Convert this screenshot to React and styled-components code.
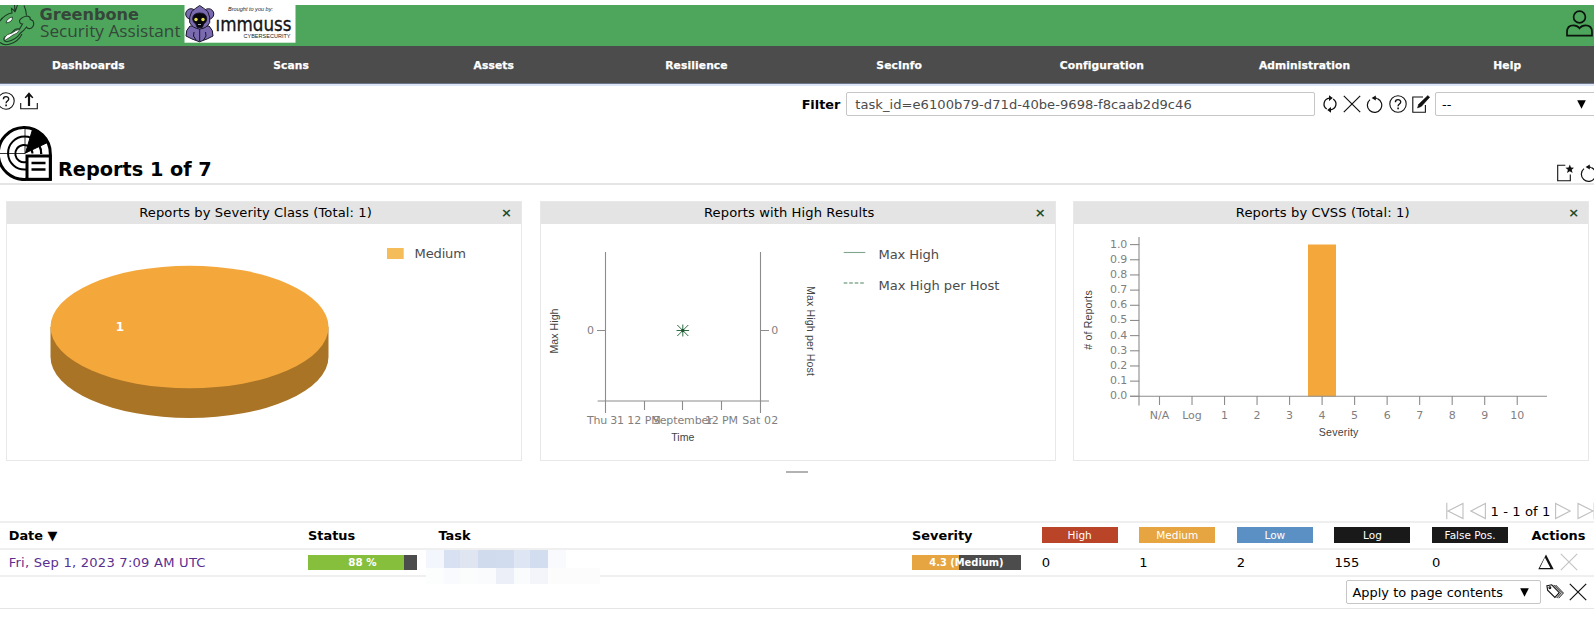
import React from 'react';
import styled, { createGlobalStyle } from 'styled-components';

const GlobalStyle = createGlobalStyle`
  * { box-sizing: border-box; }
  body {
    margin: 0;
    background: #fff;
    color: #000;
    font-family: Verdana, "DejaVu Sans", sans-serif;
    font-size: 13.1px;
    overflow: hidden;
  }
  svg { display: block; }
`;

const Page = styled.div`
  width: 1594px;
  height: 618px;
  padding-top: 5px;
  display: flex;
  flex-direction: column;
  overflow: hidden;
`;

/* ---------- header ---------- */

const Header = styled.header`
  height: 41px;
  flex: none;
  background: #4da65c;
  display: flex;
  justify-content: space-between;
`;

const UserButton = styled.div`
  padding: 5px 1px 0 0;
`;

const NavBar = styled.nav`
  height: 40px;
  flex: none;
  background: #4c4c4c;
  border-bottom: 2px solid #dde6f7;
  display: flex;
  overflow: hidden;
`;

const NavItems = styled.div`
  display: flex;
  flex: none;
  width: 1621.6px;
  margin-left: -13px;
  padding-top: 2px;
  border-bottom: 1px solid #6d7688;
`;

const NavItem = styled.div`
  flex: 1;
  display: flex;
  align-items: center;
  justify-content: center;
  color: #fff;
  font-weight: bold;
  font-size: 10.7px;
  letter-spacing: 0.12px;
  -webkit-text-stroke: 0.25px #fff;
`;

/* ---------- toolbar ---------- */

const Toolbar = styled.div`
  height: 38px;
  flex: none;
  display: flex;
  justify-content: space-between;
  padding-top: 6px;
`;

const ToolIcons = styled.div`
  display: flex;
  gap: 5px;
  margin-left: -3px;
`;

const FilterBar = styled.div`
  display: flex;
  align-items: center;
  height: 24px;
`;

const FilterLabel = styled.span`
  font-weight: bold;
  font-size: 12.8px;
  margin-right: 6px;
`;

const FilterInput = styled.div`
  width: 469px;
  height: 24px;
  border: 1px solid #c6c6c6;
  border-radius: 2px;
  padding-left: 8px;
  line-height: 23px;
  color: #4c4c4c;
  font-size: 13.1px;
  letter-spacing: 0.03px;
`;

const FilterIcons = styled.div`
  display: flex;
  gap: 4.7px;
  margin: 0 5.5px 0 5.5px;
`;

const Select = styled.div`
  width: ${p => p.$width}px;
  height: 24px;
  flex: none;
  border: 1px solid #c6c6c6;
  border-radius: 2px;
  padding: 0 ${p => p.$arrowGap}px 0 6px;
  display: flex;
  align-items: center;
  justify-content: space-between;
  font-size: 12.95px;
  margin-right: ${p => p.$mr || 0}px;
`;

/* ---------- section title ---------- */

const SectionHeader = styled.div`
  height: 61px;
  flex: none;
  border-bottom: 2px solid #e5e5e5;
  display: flex;
  align-items: flex-end;
  justify-content: space-between;
`;

const SectionTitle = styled.div`
  display: flex;
  align-items: flex-end;
  gap: 6px;
  padding-bottom: 2px;
`;

const Title = styled.h2`
  margin: 0;
  font-size: 19.3px;
  line-height: 22px;
`;

const SectionIcons = styled.div`
  display: flex;
  gap: 6px;
  padding-bottom: 1px;
  margin-right: -4px;
`;

/* ---------- dashboard ---------- */

const Dashboard = styled.div`
  flex: none;
  display: grid;
  grid-template-columns: repeat(3, 516px);
  column-gap: 17.6px;
  padding: 16px 0 0 6px;
`;

const Card = styled.section`
  height: 260px;
  border: 1px solid #e8e8e8;
`;

const CardHeader = styled.div`
  height: 22px;
  background: #e4e4e4;
  display: flex;
  align-items: center;
  padding: 0 9px 1px 0;
`;

const CardTitle = styled.div`
  flex: 1;
  text-align: center;
  padding-left: 3px;
  letter-spacing: 0.1px;
`;

const CardClose = styled.span`
  color: #1d4d2b;
  font-weight: bold;
  font-size: 13px;
  line-height: 20px;
`;

const ChartText = styled.text`
  font-family: ${p => (p.$sans ? '"Liberation Sans", Arial, sans-serif' : 'Verdana, "DejaVu Sans", sans-serif')};
  font-size: ${p => p.$size || 11}px;
  font-weight: ${p => (p.$bold ? 'bold' : 'normal')};
  font-style: ${p => (p.$italic ? 'italic' : 'normal')};
  fill: ${p => p.$color || '#7f7f7f'};
`;

const BrandText = styled(ChartText)`
  font-family: "Open Sans", "Noto Sans", sans-serif;
`;

const Axis = styled.path`
  fill: none;
  stroke: #8c8c8c;
  stroke-width: 1.1;
`;

const ResizeRow = styled.div`
  height: 40px;
  flex: none;
  display: flex;
  justify-content: center;
  padding-top: 10px;
`;

const ResizeHandle = styled.div`
  width: 22px;
  height: 2px;
  background: #b2b2b2;
`;

/* ---------- table ---------- */

const Pagination = styled.div`
  height: 20px;
  flex: none;
  display: flex;
  align-items: center;
  justify-content: flex-end;
  margin-right: -1px;
`;

const PageIcons = styled.div`
  display: flex;
  gap: 6px;
`;

const PageText = styled.span`
  margin: 0 4.5px;
  letter-spacing: 0.1px;
`;

const Row = styled.div`
  display: grid;
  grid-template-columns: 299.3px 130.5px 473.5px 129.7px repeat(4, 97.6px) 99.5px 1fr;
  grid-template-rows: 100%;
  align-items: center;
  height: ${p => p.$height}px;
  flex: none;
  border-top: 2px solid #efefef;
  padding-left: 8.7px;
`;

const HeadCell = styled.div`
  font-weight: bold;
  font-size: 12.9px;
`;

const SeverityChip = styled.div`
  width: 76px;
  height: 16px;
  background: ${p => p.$color};
  color: #fff;
  font-size: 10.5px;
  line-height: 16px;
  text-align: center;
`;

const DateLink = styled.a`
  color: #5a2f91;
  letter-spacing: 0.22px;
`;

const Bar = styled.div`
  width: ${p => p.$width}px;
  height: 14.5px;
  background: linear-gradient(to right, ${p => p.$color} ${p => p.$value}%, #4c4c4c ${p => p.$value}%);
  color: #fff;
  font-weight: bold;
  font-size: ${p => p.$size}px;
  line-height: 15.5px;
  text-align: center;
`;

const Redacted = styled.div`
  display: grid;
  grid-template-columns: 18px 16px 18px 18px 18px 16px 18px 18px 34px;
  grid-template-rows: 18px 16px;
  margin: 0 0 0 -12.5px;
  align-self: start;
  position: relative;
  z-index: 1;
`;

const Pixel = styled.i`
  background: ${p => p.$color};
`;

const RowActions = styled.div`
  display: flex;
  align-items: center;
  gap: 6px;
  padding-left: 6px;
`;

const Footer = styled.div`
  height: 34px;
  flex: none;
  border-top: 2px solid #efefef;
  border-bottom: 1px solid #e5e5e5;
  display: flex;
  align-items: center;
  justify-content: flex-end;
  gap: 5px;
  padding: 0 7.5px 1px 0;
`;

/* ---------- icons ---------- */

const Icon = ({ w = 18, h = 18, vb = '0 0 18 18', children }) => (
  <svg width={w} height={h} viewBox={vb} fill="none" stroke="#111" strokeWidth="1.1">
    {children}
  </svg>
);

const HelpIcon = () => (
  <Icon>
    <circle cx="9" cy="9" r="8.2" />
    <path d="M6.4 7.2C6.4 3.8 11.7 3.9 11.7 7c0 2-2.6 2-2.6 4.2" strokeWidth="1.4" />
    <path d="M9.1 12.6v1.6" strokeWidth="1.6" />
  </Icon>
);

const ExportIcon = () => (
  <Icon>
    <path d="M.7 11v5.8h16.6V11" />
    <path d="M9 14V3" strokeWidth="2.2" />
    <path d="M9 .3l4.4 5.2-1 .7L9 3.6 5.6 6.2l-1-.7z" fill="#111" stroke="none" />
  </Icon>
);

const RefreshIcon = () => (
  <Icon>
    <path d="M5.8 14C1.4 11 2.2 4 8.600 3.100M12.200 4C16.600 7 15.800 14 9.400 14.900" strokeWidth="1.3" />
    <path d="M8 .3v5.600l3.800-2.800zM10 17.700v-5.600l-3.800 2.800z" fill="#111" stroke="none" />
  </Icon>
);

const CrossIcon = ({ color = '#111' }) => (
  <Icon>
    <path d="M.8.8l16.400 16.400M17.200.8L.8 17.200" stroke={color} strokeWidth="1.2" />
  </Icon>
);

const ResetIcon = () => (
  <Icon>
    <path d="M4 4.600A7.200 7.200 0 1 0 11.500 3.600" strokeWidth="1.2" />
    <path d="M5.600 3L9.800 .4v5.200zM9 2.200q2 0 3 1.600l-3 .2z" fill="#111" stroke="none" />
  </Icon>
);

const EditIcon = () => (
  <Icon>
    <path d="M11 2H.8v15.200h12.600V10" />
    <path d="M15.800.6l1.900 1.600L9.300 11.400 5.500 13l1.200-3.800z" fill="#111" stroke="#111" strokeWidth=".5" />
  </Icon>
);

const NewIcon = () => (
  <Icon>
    <path d="M9.300 1.300H1.700v15.500h12.600V10.500" />
    <path d="M13.800.4l1.200 3.100 3.200.2-2.500 2.100.9 3.200-2.800-1.800L11 9l.9-3.200-2.500-2.100 3.200-.2z" fill="#111" stroke="none" />
  </Icon>
);

const DeltaIcon = () => (
  <Icon w={16} h={16} vb="0 0 16 16">
    <path d="M8 .6L15.700 15.200H.3zM6.900 3.600L1.900 13.900h10.500z" fill="#111" fillRule="evenodd" stroke="none" />
  </Icon>
);

const TagsIcon = () => (
  <Icon>
    <path d="M.9 2.700l4.800-.9 7.600 7.900-4.400 4.700L1.600 7.200z" />
    <circle cx="3.900" cy="4.700" r=".9" />
    <path d="M7.600 1.900l7.800 7.900-4.700 5.200M9.600 2l7.800 8-4.800 5.200" strokeWidth="1" />
  </Icon>
);

const ArrowDown = () => (
  <svg width="9" height="9" viewBox="0 0 9 9">
    <path d="M.2.2h8.600L4.500 8.800z" fill="#000" />
  </svg>
);

const PageArrow = ({ flip, bar, w }) => (
  <svg width={w} height="18" viewBox={`0 0 ${w} 18`} fill="none" stroke="#bfbfbf" strokeWidth="1.1">
    <g transform={flip ? `translate(${w} 0) scale(-1 1)` : undefined}>
      <path d={bar ? 'M2 9L17 1.500v15zM.8.800v16.400' : 'M.9 9L15.400 1.500v15z'} />
    </g>
  </svg>
);

const ReportIcon = () => (
  <svg width="52" height="55" viewBox="0 0 52 55" fill="none" stroke="#000">
    <path d="M26 53.500A26 26 0 1 1 50.300 27.500V53.300H25" strokeWidth="3" />
    <path d="M26 43.500a16.500 16.500 0 1 1 15-15.500M26 36a8.600 8.600 0 1 1 6.500-8.500" strokeWidth="2" />
    <path d="M0 27.500h25M25 2v26" strokeWidth=".8" />
    <path d="M25.500 27L32.500 3.500Q42 6.500 47.500 16.500z" fill="#000" />
    <path d="M39 19.500q2.500 3.500 2.500 8.500" strokeWidth="1.8" />
    <rect x="27" y="30" width="23.300" height="23.300" fill="#fff" strokeWidth="3" />
    <path d="M31.500 37h14M31.500 43.500h14" strokeWidth="2.6" />
  </svg>
);

const UserIcon = () => (
  <svg width="27" height="27" viewBox="0 0 27 27" fill="none" stroke="#0b130c" strokeWidth="1.7">
    <circle cx="13.500" cy="7" r="5.900" />
    <path d="M1 25.700V22c0-4.500 2.500-6.600 6.500-6.600 3 0 4.500 1 6 2.900 1.500-1.900 3-2.900 6-2.900 4 0 6.500 2.100 6.500 6.600v3.700z" />
  </svg>
);

const Brand = () => (
  <svg width="300" height="41" viewBox="0 5 300 41">
    {/* dragon head */}
    <g fill="none" stroke="#1e3a25" strokeWidth="1.1">
      <path d="M0 21Q5 14 12 13L11.500 8.500q2 1 3.500 3.500L14.500 5M15 12L17.500 5M24 5.500q2 4 2.500 10M2 18q-1 2-2 3" />
      <path d="M27 16q-5.500 1-7.500 4.500 0 3.500 3 3.500l-3 5q-4-1-7 3T4.500 37q-2 4 2.500 4.700Q16 40 20.500 33q3-2 6-6 1.500 2.500 5 1 3.500-3 1.500-7l-3-2q1-2-3-3z" />
      <path d="M0 42.500q4 3.500 10 1.500 8-2 12-10" />
    </g>
    <path d="M6 23q1-5 6.500-6 .5 5-6.500 6zM5 37q2-3 7-4 4-3 8-4-2 5-7 6-4 3-7.500 5-2 0-.5-3z" fill="#fff" stroke="#1e3a25" strokeWidth=".8" />
    <ChartText x="39.500" y="20.400" $size={16.5} $bold $color="#36463a" textLength="99.500" lengthAdjust="spacingAndGlyphs">Greenbone</ChartText>
    <BrandText x="40" y="37.300" $size={16} $color="#36463a" textLength="140.500" lengthAdjust="spacingAndGlyphs">Security Assistant</BrandText>
    {/* sponsor badge */}
    <rect x="184.500" y="5" width="111" height="37.700" fill="#fff" />
    <g stroke="#191528" strokeWidth="1">
      <circle cx="191" cy="14" r="5.300" fill="#7a6bb0" />
      <circle cx="208.500" cy="14" r="5.300" fill="#7a6bb0" />
      <path d="M190 26q-4.500 4-4 10 5 3 13.500 5.800Q208 39 213 36q.5-6-4-10z" fill="#7a6bb0" />
      <path d="M199.700 5.500q4 2.500 8 6 3 6 2 11-3 6-10 6.500-7-.5-10-6.500-1-5 2-11 4-3.500 8-6z" fill="#7a6bb0" />
      <path d="M199.700 29v12.500M194 32q-2 4 2 8M205.500 32q2 4-2 8" fill="none" />
      <path d="M192.700 19q0-6 7-6t7 6q0 3-3 5l-1.500 3.500h-5l-1.500-3.500q-3-2-3-5z" fill="#08080c" />
    </g>
    <circle cx="196" cy="19.500" r="1.700" fill="#e3e04a" />
    <circle cx="203" cy="19.500" r="1.700" fill="#e3e04a" />
    <path d="M198 24.500h3" stroke="#aaa" strokeWidth="1" />
    <ChartText x="228" y="11.300" $size={5.5} $italic $sans $color="#222" textLength="45" lengthAdjust="spacingAndGlyphs">Brought to you by:</ChartText>
    <ChartText x="215.500" y="31" $size={18.8} $color="#151515" stroke="#151515" strokeWidth=".35" textLength="76" lengthAdjust="spacingAndGlyphs">ımmɑuss</ChartText>
    <ChartText x="243.500" y="38.300" $size={5.5} $sans $color="#222" textLength="47" lengthAdjust="spacingAndGlyphs">CYBERSECURITY</ChartText>
  </svg>
);

/* ---------- charts (drawn in page units, offset by the card body) ---------- */

const PieChart = () => (
  <svg width="514" height="236" viewBox="7 224 514 236">
    <path d="M50.500 327v29.700a139 61.300 0 0 0 278 0V327z" fill="#a97426" />
    <ellipse cx="189.500" cy="327" rx="139" ry="61.300" fill="#f4a83c" />
    <ChartText x="120" y="330.800" $size={12} $bold $color="#fff" textAnchor="middle">1</ChartText>
    <rect x="387" y="248" width="16.700" height="11" fill="#f5bd5a" />
    <ChartText x="414.500" y="258" $size={13.1} $color="#4c4c4c" textLength="51.500">Medium</ChartText>
  </svg>
);

const TIME_TICKS = [
  { x: 605.4, label: 'Thu 31', w: 37 },
  { x: 644, label: '12 PM', w: 33.5 },
  { x: 682.8, label: 'September', w: 60 },
  { x: 721.5, label: '12 PM', w: 33 },
  { x: 760.2, label: 'Sat 02', w: 36 },
];

const HighResultsChart = () => (
  <svg width="514" height="236" viewBox="541 224 514 236">
    <Axis d="M605.500 252v161M760.500 252v161M597.600 401H769M597 330.500h8.500M760.500 330.500h8.500M644.500 401v9M682.500 401v9M721.500 401v9" />
    <ChartText x="594" y="333.700" textAnchor="end">0</ChartText>
    <ChartText x="771.200" y="333.700">0</ChartText>
    {TIME_TICKS.map(t => (
      <ChartText key={t.x} x={t.x} y="423.500" textAnchor="middle" textLength={t.w}>{t.label}</ChartText>
    ))}
    <ChartText x="682.800" y="440.600" $sans $size={10.6} $color="#444" textAnchor="middle">Time</ChartText>
    <ChartText transform="translate(558 331) rotate(-90)" $sans $size={10.6} $color="#444" textAnchor="middle" textLength="45">Max High</ChartText>
    <ChartText transform="translate(807 331) rotate(90)" $sans $size={10.6} $color="#444" textAnchor="middle" textLength="90">Max High per Host</ChartText>
    <path d="M677.300 325l11 11M688.300 325l-11 11M682.800 324.500v12M676.500 330.500h12.600" stroke="#2e6b40" strokeWidth="1" />
    <circle cx="682.800" cy="330.500" r="1.700" fill="#1d5230" />
    <path d="M843.700 252.500H865.300" stroke="#7fa68d" strokeWidth="1.1" />
    <path d="M843.700 283H864" stroke="#4a8260" strokeWidth="1.1" strokeDasharray="3.600 1.900" />
    <ChartText x="878.500" y="259" $size={13.1} $color="#4c4c4c" textLength="60.500">Max High</ChartText>
    <ChartText x="878.500" y="289.500" $size={13.1} $color="#4c4c4c" textLength="121">Max High per Host</ChartText>
  </svg>
);

const CVSS_LABELS = ['N/A', 'Log', '1', '2', '3', '4', '5', '6', '7', '8', '9', '10'];

const CvssChart = () => (
  <svg width="514" height="236" viewBox="1074 224 514 236">
    <rect x="1308" y="244.500" width="28" height="152" fill="#f4a83c" />
    <Axis d="M1139 237v168.500M1130 396.300H1547" />
    {Array.from({ length: 11 }, (_, i) => (
      <g key={i}>
        <Axis d={`M1130 ${396.3 - i * 15.17}h9.300`} />
        <ChartText x="1127.300" y={399.2 - i * 15.17} textAnchor="end" textLength="17.200">{(i / 10).toFixed(1)}</ChartText>
      </g>
    ))}
    {CVSS_LABELS.map((label, i) => (
      <g key={label}>
        <Axis d={`M${1159.5 + i * 32.52} 396v9`} />
        <ChartText x={1159.5 + i * 32.52} y="419" textAnchor="middle">{label}</ChartText>
      </g>
    ))}
    <ChartText x="1338.600" y="435.600" $sans $size={10.6} $color="#444" textAnchor="middle" textLength="39.500">Severity</ChartText>
    <ChartText transform="translate(1091.500 320) rotate(-90)" $sans $size={10.6} $color="#444" textAnchor="middle" textLength="59.500">{'# of Reports'}</ChartText>
  </svg>
);

const MENU = ['Dashboards', 'Scans', 'Assets', 'Resilience', 'SecInfo', 'Configuration', 'Administration', 'Help'];

const CARDS = [
  { title: 'Reports by Severity Class (Total: 1)', Chart: PieChart },
  { title: 'Reports with High Results', Chart: HighResultsChart },
  { title: 'Reports by CVSS (Total: 1)', Chart: CvssChart },
];

const CHIPS = [
  { label: 'High', color: '#b94427' },
  { label: 'Medium', color: '#e6a540' },
  { label: 'Low', color: '#5b90c4' },
  { label: 'Log', color: '#191919' },
  { label: 'False Pos.', color: '#191919' },
];

const PIXELS = [
  '#f3f6fc', '#d8e1f2', '#dfe6f2', '#d0dbed', '#d2dcef', '#dfe6f3', '#d3ddf0', '#f8fafd', '#ffffff',
  '#fcfdfd', '#f9fafd', '#fbfdfc', '#fafbfc', '#eceff8', '#fafbfd', '#f4f5fa', '#fcfcfc', '#fcfcfc',
];

export default function App() {
  return (
    <>
      <GlobalStyle />
      <Page>
        <Header>
          <Brand />
          <UserButton><UserIcon /></UserButton>
        </Header>
        <NavBar>
          <NavItems>
            {MENU.map(m => <NavItem key={m}>{m}</NavItem>)}
          </NavItems>
        </NavBar>

        <Toolbar>
          <ToolIcons>
            <HelpIcon />
            <ExportIcon />
          </ToolIcons>
          <FilterBar>
            <FilterLabel>Filter</FilterLabel>
            <FilterInput>task_id=e6100b79-d71d-40be-9698-f8caab2d9c46</FilterInput>
            <FilterIcons>
              <RefreshIcon />
              <CrossIcon />
              <ResetIcon />
              <HelpIcon />
              <EditIcon />
            </FilterIcons>
            <Select $width={164} $arrowGap={12} $mr={-5}>
              <span>--</span>
              <ArrowDown />
            </Select>
          </FilterBar>
        </Toolbar>

        <SectionHeader>
          <SectionTitle>
            <ReportIcon />
            <Title>Reports 1 of 7</Title>
          </SectionTitle>
          <SectionIcons>
            <NewIcon />
            <ResetIcon />
          </SectionIcons>
        </SectionHeader>

        <Dashboard>
          {CARDS.map(({ title, Chart }) => (
            <Card key={title}>
              <CardHeader>
                <CardTitle>{title}</CardTitle>
                <CardClose>×</CardClose>
              </CardHeader>
              <Chart />
            </Card>
          ))}
        </Dashboard>
        <ResizeRow><ResizeHandle /></ResizeRow>

        <Pagination>
          <PageIcons>
            <PageArrow bar w={18} />
            <PageArrow w={16} />
          </PageIcons>
          <PageText>1 - 1 of 1</PageText>
          <PageIcons>
            <PageArrow flip w={16} />
            <PageArrow flip bar w={18} />
          </PageIcons>
        </Pagination>

        <Row $height={26.5}>
          <HeadCell>Date ▼</HeadCell>
          <HeadCell>Status</HeadCell>
          <HeadCell>Task</HeadCell>
          <HeadCell>Severity</HeadCell>
          {CHIPS.map(c => <SeverityChip key={c.label} $color={c.color}>{c.label}</SeverityChip>)}
          <HeadCell>Actions</HeadCell>
        </Row>
        <Row $height={27.5}>
          <DateLink>Fri, Sep 1, 2023 7:09 AM UTC</DateLink>
          <Bar $width={109} $value={88} $color="#86bf3c" $size={10.3}>88 %</Bar>
          <Redacted>
            {PIXELS.map((c, i) => <Pixel key={i} $color={c} />)}
          </Redacted>
          <Bar $width={109} $value={43} $color="#e6a540" $size={9.9}>4.3 (Medium)</Bar>
          <span>0</span>
          <span>1</span>
          <span>2</span>
          <span>155</span>
          <span>0</span>
          <RowActions>
            <DeltaIcon />
            <CrossIcon color="#c4c4c4" />
          </RowActions>
        </Row>
        <Footer>
          <Select $width={195} $arrowGap={11}>
            <span>Apply to page contents</span>
            <ArrowDown />
          </Select>
          <TagsIcon />
          <CrossIcon />
        </Footer>
      </Page>
    </>
  );
}
